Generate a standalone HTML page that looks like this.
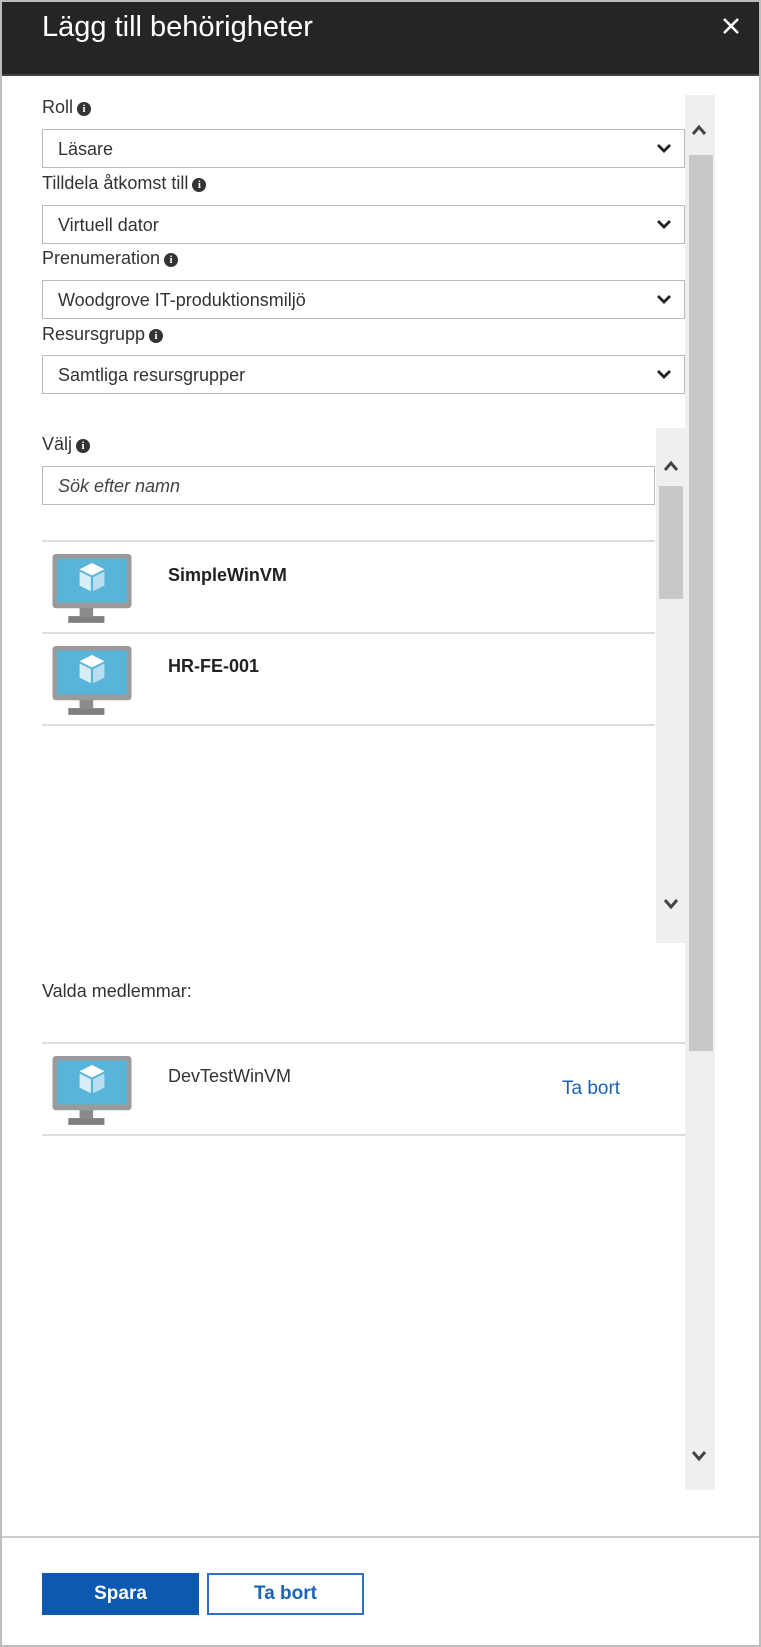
<!DOCTYPE html>
<html><head><meta charset="utf-8"><style>
*{box-sizing:border-box;margin:0;padding:0}
body{width:761px;height:1647px;background:#fff;font-family:"Liberation Sans",sans-serif;color:#333;position:relative;overflow:hidden}
.abs{position:absolute}
.frame{left:0;top:0;width:761px;height:1647px;border:2px solid #bdbdbd}
.hdr{left:2px;top:2px;width:757px;height:74px;background:#252525;border-bottom:2px solid #444}
.title{left:42px;top:11px;color:#fff;font-size:29px}
.lbl{font-size:18px;color:#333;left:42px}
.info{display:inline-block;width:14px;height:14px;border-radius:50%;background:#333;color:#fff;font-size:11px;font-weight:bold;text-align:center;line-height:14px;font-family:"Liberation Serif",serif;vertical-align:1px;margin-left:4px}
.dd{left:42px;width:643px;height:39px;border:1px solid #bbb;font-size:18px;padding:9px 15px;color:#333}
.chev{position:absolute;right:12px;top:12px}
.line{height:2px;background:#ddd}
.name{font-size:18px;font-weight:bold;left:168px;color:#222}
</style></head><body>
<div class="abs frame"></div>
<div class="abs hdr"></div>
<div class="abs title">Lägg till behörigheter</div>
<svg class="abs" style="left:722px;top:17px" width="18" height="18" viewBox="0 0 18 18"><path d="M2 2L16 16M16 2L2 16" stroke="#fff" stroke-width="2.6"/></svg>

<div class="abs" style="left:685px;top:95px;width:30px;height:1395px;background:#efefef"></div>
<div class="abs" style="left:689px;top:155px;width:24px;height:896px;background:#c8c8c8"></div>
<svg class="abs" style="left:691px;top:124px" width="16" height="12" viewBox="0 0 16 12"><path d="M2 10L8 3L14 10" stroke="#444" stroke-width="3" fill="none"/></svg>
<svg class="abs" style="left:691px;top:1450px" width="16" height="12" viewBox="0 0 16 12"><path d="M2 2L8 9L14 2" stroke="#444" stroke-width="3" fill="none"/></svg>

<div class="abs lbl" style="top:97px">Roll<span class="info">i</span></div>
<div class="abs dd" style="top:129px">Läsare<svg class="chev" width="16" height="12" viewBox="0 0 16 12"><path d="M2 3L8 9L14 3" stroke="#222" stroke-width="2.8" fill="none"/></svg></div>
<div class="abs lbl" style="top:173px">Tilldela åtkomst till<span class="info">i</span></div>
<div class="abs dd" style="top:205px">Virtuell dator<svg class="chev" width="16" height="12" viewBox="0 0 16 12"><path d="M2 3L8 9L14 3" stroke="#222" stroke-width="2.8" fill="none"/></svg></div>
<div class="abs lbl" style="top:248px">Prenumeration<span class="info">i</span></div>
<div class="abs dd" style="top:280px">Woodgrove IT-produktionsmiljö<svg class="chev" width="16" height="12" viewBox="0 0 16 12"><path d="M2 3L8 9L14 3" stroke="#222" stroke-width="2.8" fill="none"/></svg></div>
<div class="abs lbl" style="top:324px">Resursgrupp<span class="info">i</span></div>
<div class="abs dd" style="top:355px">Samtliga resursgrupper<svg class="chev" width="16" height="12" viewBox="0 0 16 12"><path d="M2 3L8 9L14 3" stroke="#222" stroke-width="2.8" fill="none"/></svg></div>

<div class="abs" style="left:656px;top:428px;width:29px;height:515px;background:#efefef"></div>
<div class="abs" style="left:659px;top:486px;width:24px;height:113px;background:#c8c8c8"></div>
<svg class="abs" style="left:663px;top:460px" width="16" height="12" viewBox="0 0 16 12"><path d="M2 10L8 3L14 10" stroke="#444" stroke-width="3" fill="none"/></svg>
<svg class="abs" style="left:663px;top:898px" width="16" height="12" viewBox="0 0 16 12"><path d="M2 2L8 9L14 2" stroke="#444" stroke-width="3" fill="none"/></svg>

<div class="abs lbl" style="top:434px">Välj<span class="info">i</span></div>
<div class="abs" style="left:42px;top:466px;width:613px;height:39px;border:1px solid #bbb;font-size:18px;font-style:italic;padding:9px 15px;color:#444">Sök efter namn</div>

<div class="abs line" style="left:42px;top:540px;width:613px"></div>
<div class="abs line" style="left:42px;top:632px;width:613px"></div>
<div class="abs line" style="left:42px;top:724px;width:613px"></div>

<svg width="0" height="0" style="position:absolute"><defs><g id="vm">
<rect x="14" y="55" width="32" height="6" fill="#7f7f7f"/><rect x="24" y="47" width="12" height="9" fill="#8a8a8a"/>
<rect x="0" y="0" width="70" height="48" rx="3" fill="#9a9a9a"/><rect x="4" y="4" width="62" height="39" fill="#59b4d9"/>
<path d="M35 8L46 13.5L35 19L24 13.5Z" fill="#fff"/><path d="M24 15.5L34 20.5V33L24 28Z" fill="#d8eef7"/><path d="M46 15.5L36 20.5V33L46 28Z" fill="#b8dff0"/>
</g></defs></svg>
<svg class="abs" style="left:52px;top:554px" width="80" height="70" viewBox="0 0 70 62"><use href="#vm"/></svg>
<svg class="abs" style="left:52px;top:646px" width="80" height="70" viewBox="0 0 70 62"><use href="#vm"/></svg>
<div class="abs name" style="top:565px">SimpleWinVM</div>
<div class="abs name" style="top:656px">HR-FE-001</div>

<div class="abs lbl" style="top:981px">Valda medlemmar:</div>
<div class="abs line" style="left:42px;top:1042px;width:643px"></div>
<svg class="abs" style="left:52px;top:1056px" width="80" height="70" viewBox="0 0 70 62"><use href="#vm"/></svg>
<div class="abs" style="left:168px;top:1066px;font-size:18px;color:#333">DevTestWinVM</div>
<div class="abs" style="left:562px;top:1078px;font-size:19px;color:#1a63b5">Ta bort</div>
<div class="abs line" style="left:42px;top:1134px;width:643px"></div>

<div class="abs" style="left:2px;top:1536px;width:757px;height:2px;background:#ccc"></div>
<div class="abs" style="left:42px;top:1573px;width:157px;height:42px;background:#0b59b0;color:#fff;font-weight:bold;font-size:19px;text-align:center;line-height:42px">Spara</div>
<div class="abs" style="left:207px;top:1573px;width:157px;height:42px;border:2px solid #2b72c2;color:#1a63b5;font-weight:bold;font-size:19px;text-align:center;line-height:38px">Ta bort</div>
</body></html>
